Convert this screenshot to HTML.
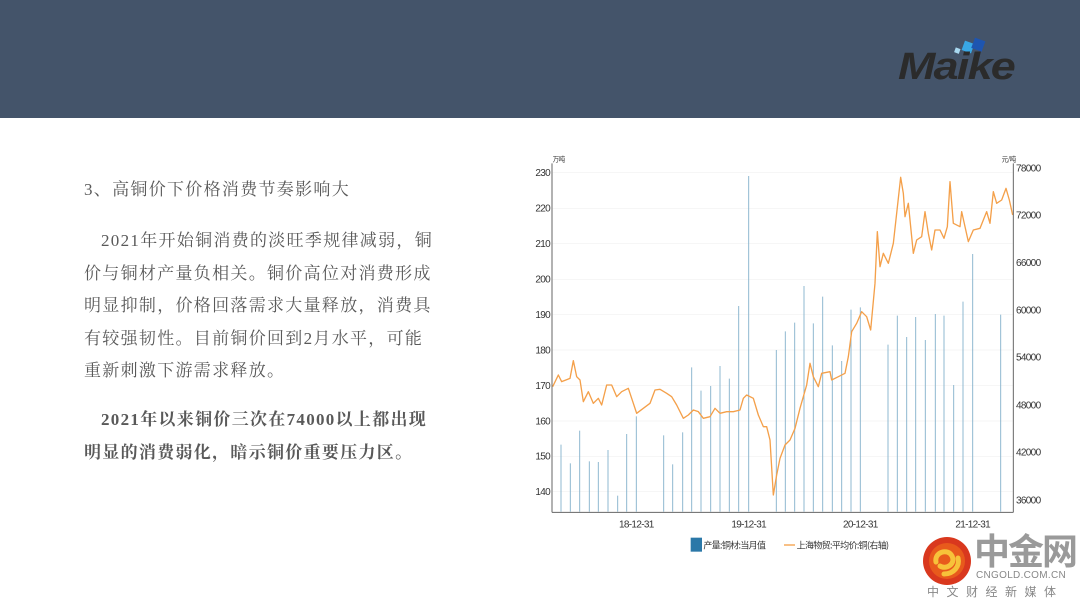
<!DOCTYPE html>
<html><head><meta charset="utf-8"><style>
body{margin:0;width:1080px;height:608px;background:#fff;position:relative;overflow:hidden;font-family:"Liberation Serif","Noto Serif CJK SC",serif;}
.hdr{position:absolute;left:0;top:0;width:1080px;height:118px;background:#44546a;}
.t{position:absolute;left:84px;color:#595959;font-size:17px;letter-spacing:1.3px;}
p{margin:0}
.sm{font-family:"Liberation Sans","Noto Sans CJK SC",sans-serif;}
</style></head><body>
<div class="hdr">
<svg style="position:absolute;left:895px;top:36px" width="140" height="50" viewBox="0 0 140 50">
<rect x="60" y="12" width="5" height="5" fill="#a8d8f0" transform="rotate(20 62 14)"/>
<rect x="68" y="6" width="10" height="10" fill="#39a8e6" transform="rotate(20 73 11)"/>
<rect x="78" y="3" width="11" height="11" fill="#1e55b0" transform="rotate(20 83 8)"/>
<text x="3" y="43" font-family="Liberation Sans,sans-serif" font-size="38" font-weight="bold" font-style="italic" fill="#2b2b2b" letter-spacing="-1.5" textLength="116" lengthAdjust="spacingAndGlyphs">Maike</text>
</svg>
</div>
<div class="t" style="top:175px;">3、高铜价下价格消费节奏影响大</div>
<div class="t" style="top:225px;width:352px;line-height:32.5px;"><p style="text-indent:17px">2021年开始铜消费的淡旺季规律减弱，铜价与铜材产量负相关。铜价高位对消费形成明显抑制，价格回落需求大量释放，消费具有较强韧性。目前铜价回到2月水平，可能重新刺激下游需求释放。</p></div>
<div class="t" style="top:404px;width:352px;line-height:32.5px;font-weight:bold;"><p style="text-indent:17px">2021年以来铜价三次在74000以上都出现明显的消费弱化，暗示铜价重要压力区。</p></div>

<svg style="position:absolute;left:540px;top:150px;overflow:visible" width="500" height="420" viewBox="0 0 1500 1260">
<g stroke="#f0f0f0" stroke-width="2">
<line x1="38" y1="68" x2="1418" y2="68"/><line x1="38" y1="175" x2="1418" y2="175"/><line x1="38" y1="281" x2="1418" y2="281"/><line x1="38" y1="388" x2="1418" y2="388"/><line x1="38" y1="494" x2="1418" y2="494"/><line x1="38" y1="600" x2="1418" y2="600"/><line x1="38" y1="707" x2="1418" y2="707"/><line x1="38" y1="813" x2="1418" y2="813"/><line x1="38" y1="919" x2="1418" y2="919"/><line x1="38" y1="1025" x2="1418" y2="1025"/>
</g>
<g stroke="#8fb8d0" stroke-width="3">
<line x1="63" x2="63" y1="1085" y2="884"/><line x1="91" x2="91" y1="1085" y2="940"/><line x1="119" x2="119" y1="1085" y2="842"/><line x1="148" x2="148" y1="1085" y2="934"/><line x1="175" x2="175" y1="1085" y2="936"/><line x1="204" x2="204" y1="1085" y2="900"/><line x1="233" x2="233" y1="1085" y2="1037"/><line x1="260" x2="260" y1="1085" y2="852"/><line x1="289" x2="289" y1="1085" y2="799"/><line x1="371" x2="371" y1="1085" y2="856"/><line x1="398" x2="398" y1="1085" y2="943"/><line x1="428" x2="428" y1="1085" y2="847"/><line x1="455" x2="455" y1="1085" y2="652"/><line x1="483" x2="483" y1="1085" y2="722"/><line x1="512" x2="512" y1="1085" y2="708"/><line x1="540" x2="540" y1="1085" y2="648"/><line x1="568" x2="568" y1="1085" y2="686"/><line x1="596" x2="596" y1="1085" y2="468"/><line x1="626" x2="626" y1="1085" y2="78"/><line x1="709" x2="709" y1="1085" y2="600"/><line x1="736" x2="736" y1="1085" y2="544"/><line x1="764" x2="764" y1="1085" y2="518"/><line x1="792" x2="792" y1="1085" y2="408"/><line x1="820" x2="820" y1="1085" y2="520"/><line x1="848" x2="848" y1="1085" y2="440"/><line x1="877" x2="877" y1="1085" y2="586"/><line x1="905" x2="905" y1="1085" y2="633"/><line x1="933" x2="933" y1="1085" y2="479"/><line x1="961" x2="961" y1="1085" y2="472"/><line x1="1044" x2="1044" y1="1085" y2="584"/><line x1="1072" x2="1072" y1="1085" y2="497"/><line x1="1100" x2="1100" y1="1085" y2="561"/><line x1="1127" x2="1127" y1="1085" y2="501"/><line x1="1156" x2="1156" y1="1085" y2="570"/><line x1="1186" x2="1186" y1="1085" y2="492"/><line x1="1212" x2="1212" y1="1085" y2="497"/><line x1="1241" x2="1241" y1="1085" y2="705"/><line x1="1269" x2="1269" y1="1085" y2="455"/><line x1="1298" x2="1298" y1="1085" y2="312"/><line x1="1382" x2="1382" y1="1085" y2="494"/>
</g>
<polyline fill="none" stroke="#f4a04a" stroke-width="4" stroke-linejoin="round" points="38,710 55,675 65,695 90,685 100,632 110,680 120,690 130,755 145,725 160,760 175,745 185,765 200,705 215,705 230,740 245,725 265,715 275,745 290,790 310,775 330,760 345,720 360,718 380,730 395,740 410,765 430,805 445,795 460,780 475,785 490,805 510,800 525,775 540,790 560,785 580,785 600,780 610,745 620,735 640,745 655,795 670,830 680,830 690,870 700,1035 710,975 720,925 735,885 750,870 765,835 780,775 800,705 810,640 820,680 835,710 845,670 870,665 875,690 895,680 915,670 925,620 935,545 950,520 965,485 980,500 992,540 1005,400 1012,245 1020,350 1030,310 1045,340 1060,280 1070,190 1082,82 1090,130 1095,200 1105,160 1110,210 1120,310 1130,270 1145,260 1155,185 1165,250 1175,300 1185,240 1200,240 1212,265 1222,230 1230,95 1240,220 1260,230 1265,185 1285,275 1300,240 1320,235 1340,185 1350,220 1360,125 1370,160 1385,150 1398,115 1408,150 1418,195"/>
<g stroke="#666" stroke-width="3"><line x1="36" y1="40" x2="36" y2="1087"/><line x1="1420" y1="40" x2="1420" y2="1087"/><line x1="36" y1="1087" x2="1420" y2="1087"/></g>
<g font-family="Liberation Sans,sans-serif" font-size="30" fill="#333" letter-spacing="-2">
<text x="30" y="78" text-anchor="end">230</text><text x="30" y="185" text-anchor="end">220</text><text x="30" y="291" text-anchor="end">210</text><text x="30" y="398" text-anchor="end">200</text><text x="30" y="504" text-anchor="end">190</text><text x="30" y="610" text-anchor="end">180</text><text x="30" y="717" text-anchor="end">170</text><text x="30" y="823" text-anchor="end">160</text><text x="30" y="929" text-anchor="end">150</text><text x="30" y="1035" text-anchor="end">140</text>
<text x="1428" y="65">78000</text><text x="1428" y="206">72000</text><text x="1428" y="348">66000</text><text x="1428" y="490">60000</text><text x="1428" y="632">54000</text><text x="1428" y="775">48000</text><text x="1428" y="917">42000</text><text x="1428" y="1060">36000</text>
<text x="289" y="1132" text-anchor="middle">18-12-31</text><text x="626" y="1132" text-anchor="middle">19-12-31</text><text x="961" y="1132" text-anchor="middle">20-12-31</text><text x="1298" y="1132" text-anchor="middle">21-12-31</text>
<text x="490" y="1196" font-family="Noto Sans CJK SC,sans-serif" font-size="27">产量:铜材:当月值</text>
<text x="770" y="1196" font-family="Noto Sans CJK SC,sans-serif" font-size="27">上海物贸:平均价:铜(右轴)</text>
<text x="38" y="35" font-size="20" font-family="Noto Sans CJK SC,sans-serif">万吨</text><text x="1385" y="35" font-size="20" font-family="Noto Sans CJK SC,sans-serif">元/吨</text>
</g>
<rect x="452" y="1163" width="34" height="42" fill="#2b78a8"/>
<line x1="732" y1="1185" x2="765" y2="1185" stroke="#f4a04a" stroke-width="4"/>
</svg>

<svg style="position:absolute;left:922px;top:536px" width="50" height="50" viewBox="0 0 50 50">
<circle cx="25" cy="25" r="24" fill="#d9381e"/><circle cx="25" cy="25" r="18" fill="#e85a1c"/>
<path d="M14 26 C12 16 26 12 30 20 C34 28 24 34 18 30 M22 38 C32 38 38 30 36 22" fill="none" stroke="#f7c23a" stroke-width="5" stroke-linecap="round"/>
</svg>
<div class="sm" style="position:absolute;left:974px;top:532px;font-size:36px;font-weight:bold;color:#9a9a9a;letter-spacing:-2px;line-height:40px;">中金网</div>
<div class="sm" style="position:absolute;left:976px;top:570px;font-size:10px;color:#888;letter-spacing:0.3px;">CNGOLD.COM.CN</div>
<div class="sm" style="position:absolute;left:927px;top:583px;font-size:12px;color:#888;letter-spacing:7.5px;">中文财经新媒体</div>
</body></html>
